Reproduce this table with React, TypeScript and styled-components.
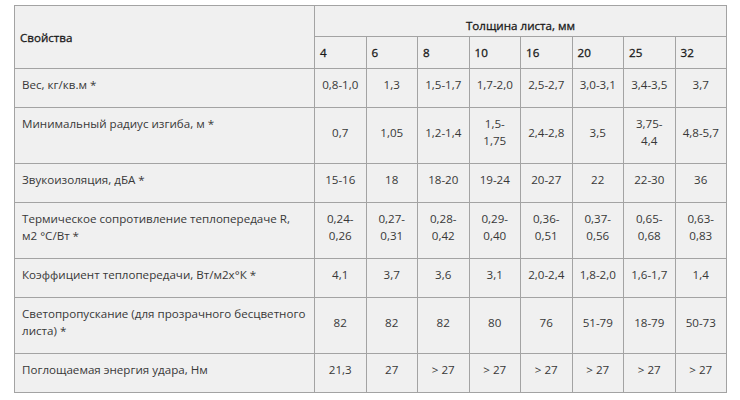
import styled, { createGlobalStyle } from "styled-components";

const GlobalStyle = createGlobalStyle`
  body {
    margin: 0;
    background: #ffffff;
    font-family: "Open Sans", "Noto Sans", sans-serif;
  }
`;

const thicknesses = ["4", "6", "8", "10", "16", "20", "25", "32"];

type Row = { label: string; values: string[] };

const rows: Row[] = [
  {
    label: "Вес, кг/кв.м *",
    values: ["0,8-1,0", "1,3", "1,5-1,7", "1,7-2,0", "2,5-2,7", "3,0-3,1", "3,4-3,5", "3,7"],
  },
  {
    label: "Минимальный радиус изгиба, м *",
    values: ["0,7", "1,05", "1,2-1,4", "1,5-\n1,75", "2,4-2,8", "3,5", "3,75-\n4,4", "4,8-5,7"],
  },
  {
    label: "Звукоизоляция, дБА *",
    values: ["15-16", "18", "18-20", "19-24", "20-27", "22", "22-30", "36"],
  },
  {
    label: "Термическое сопротивление теплопередаче R,\nм2 °С/Вт *",
    values: [
      "0,24-\n0,26",
      "0,27-\n0,31",
      "0,28-\n0,42",
      "0,29-\n0,40",
      "0,36-\n0,51",
      "0,37-\n0,56",
      "0,65-\n0,68",
      "0,63-\n0,83",
    ],
  },
  {
    label: "Коэффициент теплопередачи, Вт/м2х°К *",
    values: ["4,1", "3,7", "3,6", "3,1", "2,0-2,4", "1,8-2,0", "1,6-1,7", "1,4"],
  },
  {
    label: "Светопропускание (для прозрачного бесцветного\nлиста) *",
    values: ["82", "82", "82", "80", "76", "51-79", "18-79", "50-73"],
  },
  {
    label: "Поглощаемая энергия удара, Нм",
    values: ["21,3", "27", "> 27", "> 27", "> 27", "> 27", "> 27", "> 27"],
  },
];

const Page = styled.div`
  padding: 5px 14px;
`;

const Table = styled.table`
  width: 713px;
  border-collapse: collapse;
  table-layout: fixed;
  background: #f0f0f0;
  color: #383838;
  font-size: 11.6px;
`;

const HeadCell = styled.th<{ $align?: "left" | "center"; $top?: boolean }>`
  border: 1px solid #a3a3a3;
  padding: ${(p) => (p.$top ? "11px 6px 2px" : "7px 5px")};
  line-height: 17px;
  font-weight: 400;
  color: #1a1a1a;
  -webkit-text-stroke: 0.3px #1a1a1a;
  text-align: ${(p) => p.$align ?? "left"};
  vertical-align: middle;
`;

const LabelCell = styled.td`
  border: 1px solid #a3a3a3;
  padding: 7px 2px 14px 7px;
  line-height: 17px;
  white-space: pre-line;
  vertical-align: top;
`;

const ValueCell = styled.td`
  border: 1px solid #a3a3a3;
  padding: 7px 2px 14px;
  line-height: 17px;
  white-space: pre-line;
  text-align: center;
  vertical-align: middle;
`;

export default function App() {
  return (
    <Page>
      <GlobalStyle />
      <Table>
        <colgroup>
          <col style={{ width: 300 }} />
          {thicknesses.map((t) => (
            <col key={t} />
          ))}
        </colgroup>
        <thead>
          <tr>
            <HeadCell rowSpan={2}>Свойства</HeadCell>
            <HeadCell colSpan={8} $align="center" $top>
              Толщина листа, мм
            </HeadCell>
          </tr>
          <tr>
            {thicknesses.map((t) => (
              <HeadCell key={t}>{t}</HeadCell>
            ))}
          </tr>
        </thead>
        <tbody>
          {rows.map((row) => (
            <tr key={row.label}>
              <LabelCell>{row.label}</LabelCell>
              {row.values.map((v, i) => (
                <ValueCell key={i}>{v}</ValueCell>
              ))}
            </tr>
          ))}
        </tbody>
      </Table>
    </Page>
  );
}
